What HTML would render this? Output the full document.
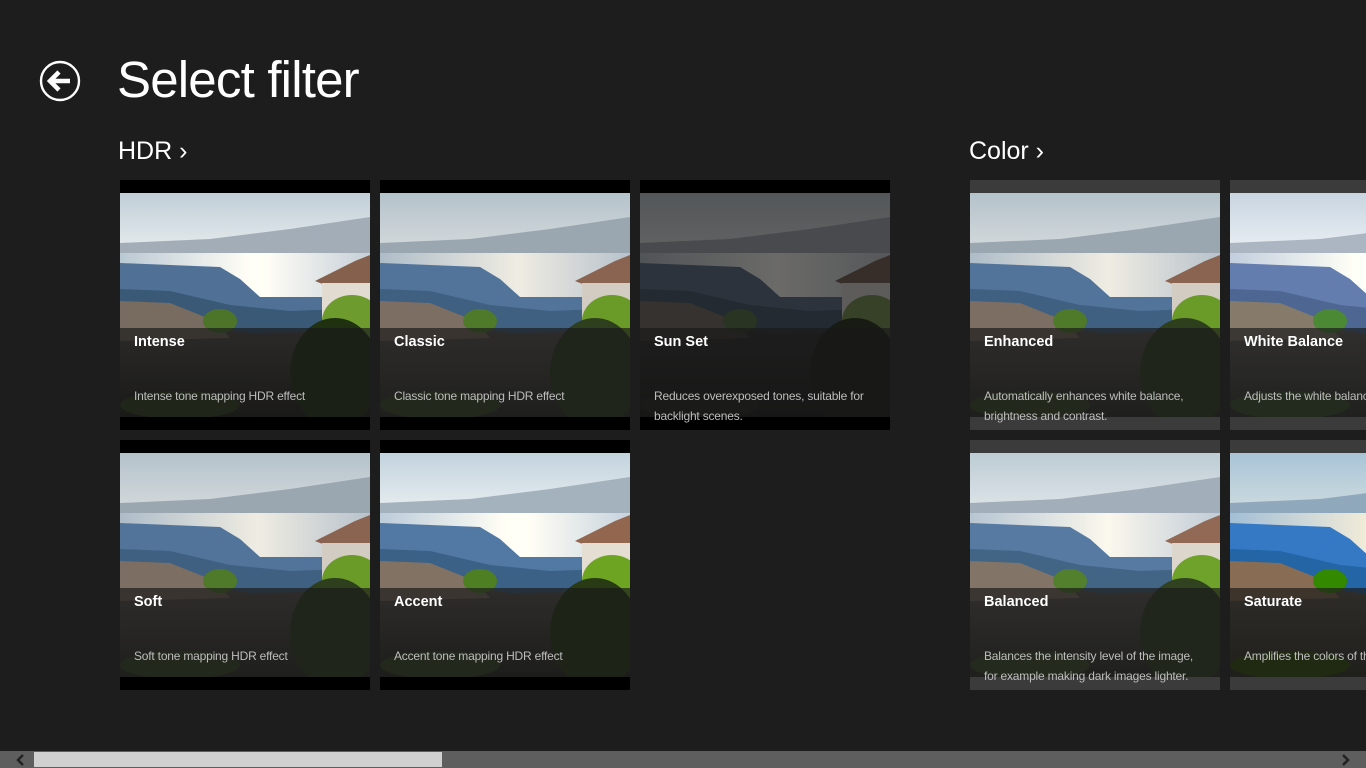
<!DOCTYPE html>
<html><head><meta charset="utf-8"><style>
*{margin:0;padding:0;box-sizing:border-box}
body{width:1366px;height:768px;background:#1d1d1d;overflow:hidden;position:relative;font-family:"Liberation Sans",sans-serif;color:#fff}
.title{position:absolute;left:117px;top:50px;font-size:51px;font-weight:normal;letter-spacing:-0.8px}
.sec{position:absolute;top:137px;font-size:25px}
.tile{position:absolute;width:250px;height:250px;background:#000;overflow:hidden}
.tile.c{background:#3b3b3b}
.tile svg{position:absolute;left:0;top:13px;width:250px;height:224px}
.cap{position:absolute;left:0;top:148px;width:250px;height:89px;background:rgba(25,25,25,0.68)}
.cap b{position:absolute;left:14px;top:6px;font-size:14.5px;font-weight:bold;color:#fff}
.cap p{position:absolute;left:14px;top:58px;font-size:12px;line-height:20px;color:#bdbdbd;width:232px;white-space:nowrap;letter-spacing:-0.2px}
.bar{position:absolute;left:0;top:751px;width:1366px;height:17px;background:#5e5e5e}
.thumb{position:absolute;left:34px;top:752px;width:408px;height:15px;background:#d0d0d0}
</style></head><body>
<svg width="0" height="0" style="position:absolute">
<defs>
<linearGradient id="sky" x1="0" y1="0" x2="0" y2="1"><stop offset="0" stop-color="#b4c2cb"/><stop offset="0.35" stop-color="#dfe2e2"/><stop offset="0.7" stop-color="#c8d0d4"/><stop offset="1" stop-color="#a9b6c0"/></linearGradient>
<linearGradient id="sea" x1="0" y1="0" x2="1" y2="0"><stop offset="0" stop-color="#aebcc8"/><stop offset="0.55" stop-color="#efece2"/><stop offset="1" stop-color="#b8c2cc"/></linearGradient>
<linearGradient id="fg" x1="0" y1="0" x2="0" y2="1"><stop offset="0" stop-color="#5e5a55"/><stop offset="1" stop-color="#2c2c26"/></linearGradient>
<symbol id="land" viewBox="0 0 250 224" preserveAspectRatio="none">
<rect width="250" height="224" fill="url(#sky)"/>
<path d="M0 50 L90 46 L170 36 L250 24 L250 62 L0 64Z" fill="#9aa6b0"/>
<rect x="0" y="60" width="250" height="50" fill="url(#sea)"/>
<path d="M0 70 L100 74 L120 86 L140 104 L250 104 L250 150 L0 150Z" fill="#52749a"/>
<path d="M0 96 L50 98 L110 112 L170 118 L250 115 L250 150 L0 150Z" fill="#3f6080"/>
<path d="M0 128 L80 132 L130 140 L250 138 L250 224 L0 224Z" fill="url(#fg)"/>
<path d="M0 108 L50 110 L95 128 L110 145 L0 148Z" fill="#7c6e62"/>
<path d="M195 88 L235 68 L250 62 L250 90 L205 92Z" fill="#8a6450"/>
<rect x="202" y="90" width="48" height="36" fill="#d2ccc2"/>
<ellipse cx="100" cy="128" rx="17" ry="12" fill="#4f7a2a"/>
<ellipse cx="232" cy="128" rx="30" ry="26" fill="#6a9a28"/>
<ellipse cx="215" cy="180" rx="45" ry="55" fill="#2e3f1e"/>
<ellipse cx="60" cy="212" rx="60" ry="14" fill="#3a4a26"/>
</symbol>
</defs></svg>

<svg style="position:absolute;left:39px;top:60px" width="42" height="42" viewBox="0 0 42 42"><circle cx="21" cy="21" r="19" fill="none" stroke="#fff" stroke-width="2.4"/><path d="M11 21 H31 M20 12 L11 21 L20 30" fill="none" stroke="#fff" stroke-width="4.5" stroke-linejoin="miter"/></svg>
<div class="title">Select filter</div>
<div class="sec" style="left:118px">HDR ›</div>
<div class="sec" style="left:969px">Color ›</div>

<div class="tile" style="left:120px;top:180px"><svg style="filter:contrast(1.2) saturate(0.8)"><use href="#land"/></svg><div class="cap"><b>Intense</b><p>Intense tone mapping HDR effect</p></div></div>
<div class="tile" style="left:380px;top:180px"><svg><use href="#land"/></svg><div class="cap"><b>Classic</b><p>Classic tone mapping HDR effect</p></div></div>
<div class="tile" style="left:640px;top:180px"><svg style="filter:brightness(0.45) saturate(0.5)"><use href="#land"/></svg><div class="cap"><b>Sun Set</b><p>Reduces overexposed tones, suitable for<br>backlight scenes.</p></div></div>
<div class="tile" style="left:120px;top:440px"><svg><use href="#land"/></svg><div class="cap"><b>Soft</b><p>Soft tone mapping HDR effect</p></div></div>
<div class="tile" style="left:380px;top:440px"><svg style="filter:contrast(1.1) brightness(1.05)"><use href="#land"/></svg><div class="cap"><b>Accent</b><p>Accent tone mapping HDR effect</p></div></div>

<div class="tile c" style="left:970px;top:180px"><svg><use href="#land"/></svg><div class="cap"><b>Enhanced</b><p>Automatically enhances white balance,<br>brightness and contrast.</p></div></div>
<div class="tile c" style="left:1230px;top:180px"><svg style="filter:brightness(1.1) hue-rotate(10deg)"><use href="#land"/></svg><div class="cap"><b>White Balance</b><p>Adjusts the white balance</p></div></div>
<div class="tile c" style="left:970px;top:440px"><svg style="filter:brightness(1.05)"><use href="#land"/></svg><div class="cap"><b>Balanced</b><p>Balances the intensity level of the image,<br>for example making dark images lighter.</p></div></div>
<div class="tile c" style="left:1230px;top:440px"><svg style="filter:saturate(2)"><use href="#land"/></svg><div class="cap"><b>Saturate</b><p>Amplifies the colors of the image</p></div></div>

<div class="bar"></div>
<div class="thumb"></div>
<svg style="position:absolute;left:14px;top:753px" width="14" height="14" viewBox="0 0 14 14"><path d="M9 2 L4 7 L9 12" fill="none" stroke="#222" stroke-width="2.5"/></svg>
<svg style="position:absolute;left:1338px;top:753px" width="14" height="14" viewBox="0 0 14 14"><path d="M5 2 L10 7 L5 12" fill="none" stroke="#222" stroke-width="2.5"/></svg>
</body></html>
